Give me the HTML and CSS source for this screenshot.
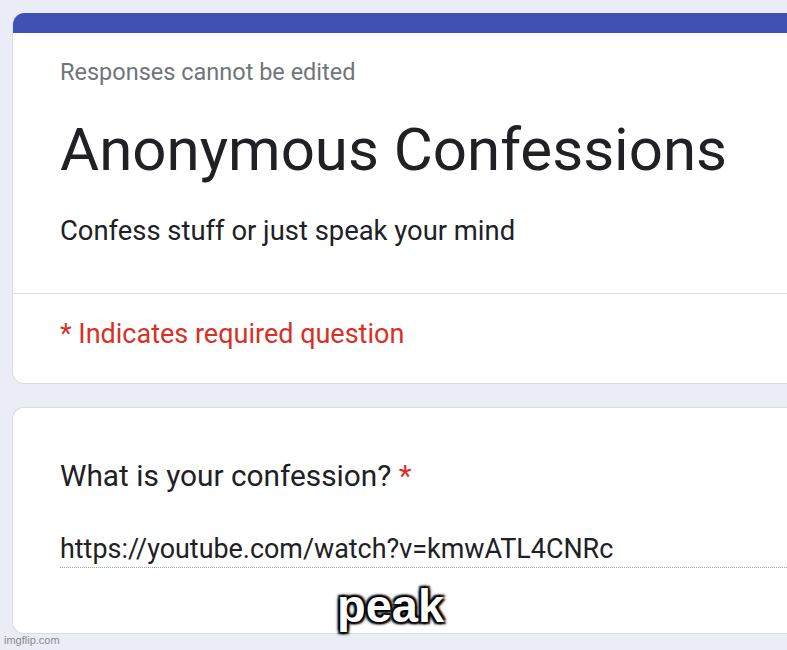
FILE: index.html
```html
<!DOCTYPE html>
<html lang="en">
<head>
    <meta charset="UTF-8">
    <title>Anonymous Confessions</title>
    <link rel="stylesheet" href="styles.css">
</head>
<body>

    <div class="card header-card">
        <div class="top-bar"></div>
        <div class="header-main">
            <p class="note">Responses cannot be edited</p>
            <h1>Anonymous Confessions</h1>
            <p class="desc">Confess stuff or just speak your mind</p>
        </div>
        <div class="required">* Indicates required question</div>
    </div>

    <div class="card question-card">
        <div class="question">What is your confession? <span class="star">*</span></div>
        <div class="answer">https://youtube.com/watch?v=kmwATL4CNRc</div>
    </div>

    <div class="caption">peak</div>
    <div class="watermark">imgflip.com</div>

</body>
</html>
```

FILE: styles.css
```css
body { margin: 0; background-color: #ebedf6; font-family: Roboto, Arial, sans-serif; height: 650px; overflow: hidden; position: relative; }
.card { background-color: white; margin-left: 12px; border: 1px solid #dadce0; border-right: none; border-radius: 12px 0 0 12px; box-sizing: border-box; }
.header-card { margin-top: 13px; height: 371px; overflow: hidden; border-top: none; }
.top-bar { height: 20px; background-color: #3f51b5; }
.header-main { padding: 25px 47px 0; height: 261px; box-sizing: border-box; border-bottom: 1px solid #dadce0; }
.note { margin: 0; font-size: 23.5px; color: #70757a; }
h1 { margin: 28px 0 0; font-size: 60px; font-weight: 400; color: #202124; }
.desc { margin: 30px 0 0; font-size: 27.4px; color: #202124; }
.required { padding: 24px 47px 0; font-size: 27px; color: #d93025; }
.question-card { margin-top: 23px; height: 227px; padding: 50px 0 0 47px; }
.question { font-size: 29.8px; color: #202124; }
.star { color: #d93025; }
.answer { margin-top: 40px; padding-bottom: 2px; font-size: 26.9px; color: #202124; border-bottom: 1px dotted #9aa0a6; }
.caption { position: absolute; left: 337px; top: 578px; font-family: "Liberation Sans", Arial, sans-serif; font-weight: bold; font-size: 47px; color: white; text-shadow: 2px 2px 2px #000, -2px -2px 2px #000, 2px -2px 2px #000, -2px 2px 2px #000, 0 0 5px #000; }
.watermark { position: absolute; left: 4px; top: 634px; font-family: "Liberation Sans", Arial, sans-serif; font-size: 11px; color: #8a8a8a; }
```
